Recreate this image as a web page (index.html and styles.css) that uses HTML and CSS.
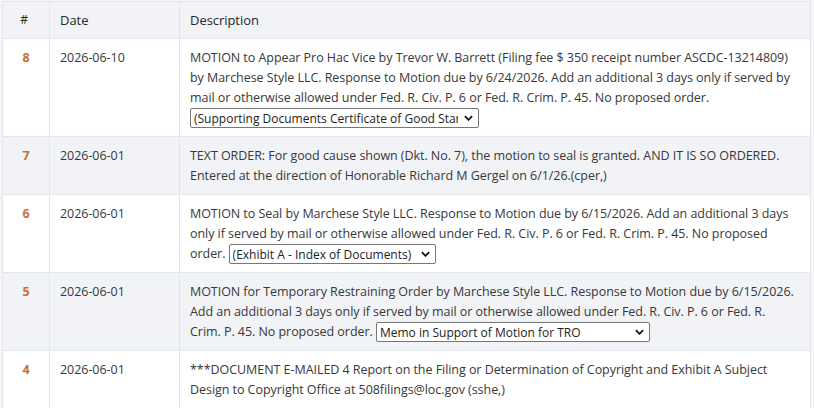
FILE: index.html
```html
<!DOCTYPE html>
<html>

<head>
    <title>Docket Entries</title>
    <meta name="viewport" content="width=device-width, initial-scale=1.0">
    <link rel="stylesheet" href="styles.css">
</head>

<body>
    <table class="docket">
        <colgroup>
            <col class="col-num">
            <col class="col-date">
            <col>
        </colgroup>
        <tr>
            <th class="num-head">#</th>
            <th>Date</th>
            <th>Description</th>
        </tr>
        <tr>
            <td class="num">8</td>
            <td>2026-06-10</td>
            <td>MOTION to Appear Pro Hac Vice by Trevor W. Barrett (Filing fee $ 350 receipt number ASCDC-13214809)<br>
                by Marchese Style LLC. Response to Motion due by 6/24/2026. Add an additional 3 days only if served by<br>
                mail or otherwise allowed under Fed. R. Civ. P. 6 or Fed. R. Crim. P. 45. No proposed order.<br>
                <span class="pick pick-long">
                    <select>
                        <option>(Supporting Documents Certificate of Good Standing)</option>
                    </select>
                    <svg class="chev" viewBox="0 0 10 6"><path d="M1 1l4 4 4-4" /></svg>
                </span>
            </td>
        </tr>
        <tr class="alt">
            <td class="num">7</td>
            <td>2026-06-01</td>
            <td>TEXT ORDER: For good cause shown (Dkt. No. 7), the motion to seal is granted. AND IT IS SO ORDERED.<br>
                Entered at the direction of Honorable Richard M Gergel on 6/1/26.(cper,)</td>
        </tr>
        <tr>
            <td class="num">6</td>
            <td>2026-06-01</td>
            <td>MOTION to Seal by Marchese Style LLC. Response to Motion due by 6/15/2026. Add an additional 3 days<br>
                only if served by mail or otherwise allowed under Fed. R. Civ. P. 6 or Fed. R. Crim. P. 45. No proposed<br>
                order.
                <span class="pick pick-short">
                    <select>
                        <option>(Exhibit A - Index of Documents)</option>
                    </select>
                    <svg class="chev" viewBox="0 0 10 6"><path d="M1 1l4 4 4-4" /></svg>
                </span>
            </td>
        </tr>
        <tr class="alt">
            <td class="num">5</td>
            <td>2026-06-01</td>
            <td>MOTION for Temporary Restraining Order by Marchese Style LLC. Response to Motion due by 6/15/2026.<br>
                Add an additional 3 days only if served by mail or otherwise allowed under Fed. R. Civ. P. 6 or Fed. R.<br>
                Crim. P. 45. No proposed order.
                <span class="pick pick-memo">
                    <select>
                        <option>Memo in Support of Motion for TRO</option>
                    </select>
                    <svg class="chev" viewBox="0 0 10 6"><path d="M1 1l4 4 4-4" /></svg>
                </span>
            </td>
        </tr>
        <tr>
            <td class="num">4</td>
            <td>2026-06-01</td>
            <td>***DOCUMENT E-MAILED 4 Report on the Filing or Determination of Copyright and Exhibit A Subject<br>
                Design to Copyright Office at 508filings@loc.gov (sshe,)</td>
        </tr>
    </table>
</body>

</html>
```

FILE: styles.css
```css
* {
    margin: 0;
    padding: 0;
    box-sizing: border-box;
}

body {
    background-color: #f7f5f6;
    padding: 1px 3px 0 2px;
    font-family: 'Open Sans', 'Noto Sans', sans-serif;
    font-size: 12.5px;
    letter-spacing: -0.05px;
    color: #383838;
}

.docket {
    width: 100%;
    border-collapse: collapse;
    table-layout: fixed;
    background-color: white;
}

.col-num {
    width: 47px;
}

.col-date {
    width: 130px;
}

.docket th,
.docket td {
    border: 1px solid #e3e6ec;
    text-align: left;
    vertical-align: top;
    line-height: 20px;
    padding: 9px 6px 8px 10px;
    white-space: nowrap;
}

.docket th {
    background-color: #f1f3f7;
    font-weight: 400;
    font-size: 13px;
    color: #262626;
    padding: 8px 10px;
}

.docket .num-head {
    text-align: center;
    font-size: 12px;
    padding-left: 6px;
}

.docket .num {
    text-align: center;
    color: #c8703a;
    font-weight: 700;
    padding-left: 6px;
}

.alt td {
    background-color: #f1f3f7;
}

.pick {
    display: inline-block;
    position: relative;
    vertical-align: top;
    line-height: 18px;
    letter-spacing: 0;
}

.pick select {
    appearance: none;
    font-family: inherit;
    font-size: 12px;
    color: #222;
    background-color: white;
    border: 1px solid #767676;
    border-radius: 2px;
    padding: 0 20px 0 3px;
    height: 20px;
    white-space: nowrap;
    overflow: hidden;
    text-overflow: clip;
}

.pick-long select {
    width: 289px;
}

.pick-short select {
    width: 207px;
}

.pick-memo select {
    width: 274px;
}

.chev {
    position: absolute;
    right: 6px;
    top: 7px;
    width: 9px;
    height: 6px;
    fill: none;
    stroke: #111;
    stroke-width: 2;
}
```
